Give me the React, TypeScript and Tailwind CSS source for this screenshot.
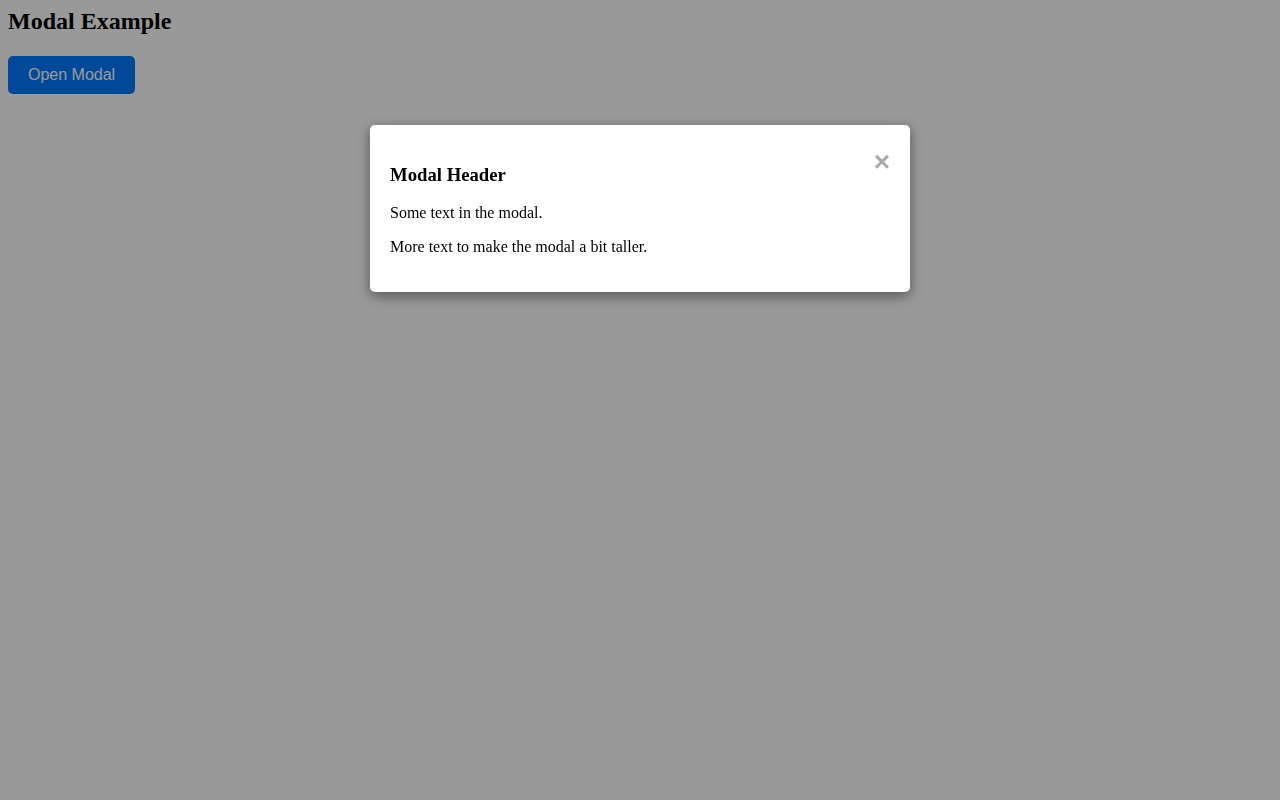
import { useState } from "react";

export default function App() {
  const [open, setOpen] = useState(true);

  return (
    <div className="min-h-screen bg-white p-2 font-['Liberation_Serif',serif] text-black">
      <h2 className="mb-[20.5px] text-2xl leading-[normal] font-bold">Modal Example</h2>
      <button
        onClick={() => setOpen(true)}
        className="cursor-pointer rounded-[5px] bg-[#007bff] px-5 py-2.5 font-['Liberation_Sans',Arial,sans-serif] text-base leading-[normal] text-white"
      >
        Open Modal
      </button>

      {open ? (
        <div className="fixed inset-0 bg-black/40" onClick={() => setOpen(false)}>
          <div
            onClick={(e) => e.stopPropagation()}
            className="mx-auto mt-[125px] w-[540px] rounded-[5px] bg-white p-5 shadow-[0_4px_14px_rgba(0,0,0,0.45)]"
          >
            <span
              onClick={() => setOpen(false)}
              className="float-right mt-px cursor-pointer font-['Liberation_Sans',Arial,sans-serif] text-[28px] leading-[normal] font-bold text-[#aaa] hover:text-black"
            >
              ×
            </span>
            <h3 className="my-[18.72px] text-[18.72px] leading-[normal] font-bold">Modal Header</h3>
            <p className="my-4 text-base leading-[normal]">Some text in the modal.</p>
            <p className="my-4 text-base leading-[normal]">More text to make the modal a bit taller.</p>
          </div>
        </div>
      ) : null}
    </div>
  );
}
